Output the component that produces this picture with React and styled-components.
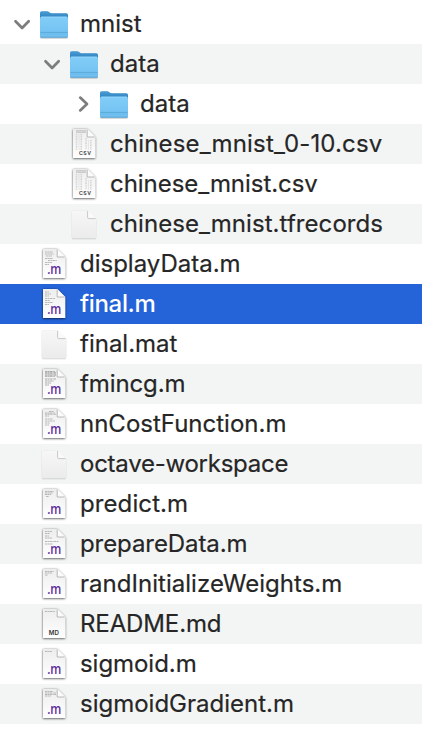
import React from "react";
import styled, { createGlobalStyle } from "styled-components";

const Global = createGlobalStyle`
  body { margin: 0; background: #fff; }
`;

const Tree = styled.main`
  box-sizing: border-box;
  width: 422px;
  height: 736px;
  padding-top: 4px;
  overflow: hidden;
  background: #fff;
  font-family: Inter, "Liberation Sans", sans-serif;
`;

const Row = styled.div`
  display: flex;
  align-items: center;
  height: 40px;
  padding-left: ${(p) => 8 + p.$depth * 30}px;
  background: ${(p) => (p.$selected ? "#2563d9" : p.$striped ? "#f3f5f5" : "#fff")};
  color: ${(p) => (p.$selected ? "#fff" : "#262626")};
`;

const Toggle = styled.span`
  display: flex;
  width: 30px;
  height: 40px;
  flex: none;
`;

const IconSlot = styled.span`
  display: flex;
  width: 32px;
  height: 40px;
  margin-right: 10px;
  flex: none;
`;

const Name = styled.span`
  font-size: 24px;
  line-height: 40px;
  font-weight: ${(p) => (p.$selected ? 500 : 400)};
  letter-spacing: ${(p) => p.$tracking}px;
  -webkit-text-stroke: ${(p) => (p.$selected ? 0 : 0.2)}px currentColor;
  white-space: nowrap;
`;

const Chevron = ({ open }) => (
  <svg width="30" height="40" viewBox="0 0 30 40" fill="none" stroke="#7d7d7d" strokeWidth="2.7" strokeLinecap="round" strokeLinejoin="round">
    <path d={open ? "M7.5 17.2 14.1 24 20.7 17.2" : "M12.2 13.6 19 20 12.2 26.4"} />
  </svg>
);

const Folder = () => (
  <svg width="32" height="40" viewBox="0 0 32 40">
    <defs>
      <linearGradient id="folderFront" x1="0" y1="0" x2="0" y2="1">
        <stop offset="0" stopColor="#82cdf8" />
        <stop offset="1" stopColor="#6fbff0" />
      </linearGradient>
      <linearGradient id="folderBack" x1="0" y1="0" x2="0" y2="1">
        <stop offset="0" stopColor="#4a9dd6" />
        <stop offset="0.3" stopColor="#2f80bd" />
      </linearGradient>
      <filter id="folderShadow" x="-15%" y="-20%" width="130%" height="150%">
        <feDropShadow dx="0" dy=".6" stdDeviation=".6" floodColor="#000" floodOpacity=".5" />
      </filter>
    </defs>
    <g filter="url(#folderShadow)">
      <path d="M2 9Q2 7.3 3.7 7.3H9.1Q10.2 7.3 11 8L12 8.8Q12.4 9.2 13.3 9.2H28.3Q30 9.2 30 11V30H2Z" fill="url(#folderBack)" />
      <path d="M2 14.3Q2 12.7 3.6 12.7H28.4Q30 12.7 30 14.3V32.1Q30 33.6 28.4 33.6H3.6Q2 33.6 2 32.1Z" fill="url(#folderFront)" />
    </g>
    <path d="M3 13H29" stroke="#9edbfb" strokeWidth=".7" />
    <path d="M2.4 28.4H29.6" stroke="#4f9fcf" strokeWidth=".7" />
    <path d="M2.4 30H29.6" stroke="#4f9fcf" strokeWidth=".5" opacity=".5" />
    <path d="M2.6 33.2H29.4" stroke="#559dcc" strokeWidth=".7" />
  </svg>
);

const PageLabel = styled.text`
  font-family: ${(p) => (p.$code ? '"Open Sans"' : "Inter")}, sans-serif;
  font-size: ${(p) => (p.$code ? 14 : p.$narrow ? 5.2 : 5.8)}px;
  font-weight: 600;
  letter-spacing: ${(p) => (p.$narrow ? 0.55 : 0)}px;
  fill: ${(p) => (p.$code ? "#5f2b9b" : "#333")};
`;

// Miniature text lines on a document: [x, y, width]
const previews = {
  display: [[7, 8, 8], [7, 10, 9], [8, 12, 6], [7, 14.5, 8], [10, 16.5, 9], [7, 18.5, 7], [7, 20.5, 4]],
  final: [[7, 8, 4], [7, 10, 6], [7, 12, 4], [7, 14.5, 10], [7, 16.5, 5], [7, 18.5, 8], [7, 20.5, 4]],
  dense: [[7, 7.5, 10], [7, 8.7, 11], [7, 9.9, 11], [7, 11.1, 11], [7, 12.3, 10], [7, 15, 11], [7, 17, 9], [7, 19, 6], [7, 21, 4]],
  cost: [[11, 7.5, 5], [7, 9, 10], [7, 10.2, 11], [7, 12, 4], [7, 15, 8], [7, 17, 10], [7, 19, 5], [7, 21, 4]],
  predict: [[7, 7.5, 9], [7, 9, 8], [7, 10.5, 6], [8, 12.5, 3]],
  prepare: [[7, 7.5, 7], [7, 9.5, 5], [7, 12, 4], [7, 14, 7], [7, 17.5, 14], [7, 20, 8]],
  rand: [[7, 7.5, 9], [7, 9, 7], [7, 11, 3]],
  readme: [[7, 7.5, 10]],
  sigmoid: [[7, 7.5, 7]],
  gradient: [[7, 7.5, 8], [7, 9, 11], [7, 10.5, 11], [7, 12, 6]],
};

const PageDefs = () => (
  <defs>
    <linearGradient id="paper" x1="0" y1="0" x2="0" y2="1">
      <stop offset="0" stopColor="#ededed" />
      <stop offset="1" stopColor="#fff" />
    </linearGradient>
    <linearGradient id="blank" x1="0" y1="0" x2="0" y2="1">
      <stop offset="0" stopColor="#f7f7f7" />
      <stop offset="1" stopColor="#ebebeb" />
    </linearGradient>
    <filter id="pageShadow" x="-20%" y="-20%" width="140%" height="140%">
      <feDropShadow dx="0" dy=".6" stdDeviation=".8" floodColor="#000" floodOpacity=".75" />
    </filter>
    <filter id="blankShadow" x="-20%" y="-20%" width="140%" height="140%">
      <feDropShadow dx="0" dy=".4" stdDeviation=".5" floodColor="#000" floodOpacity=".45" />
    </filter>
  </defs>
);

const BlankPage = () => (
  <svg width="32" height="40" viewBox="0 0 32 40">
    <PageDefs />
    <path filter="url(#blankShadow)" d="M5 6.4H19.8L28.2 14.6V33Q28.2 34.2 27 34.2H5Q3.8 34.2 3.8 33V7.6Q3.8 6.4 5 6.4Z" fill="url(#blank)" />
    <path d="M19.8 6.4 28.2 14.6H20.8Q19.6 14.6 19.6 13.4Z" fill="#fafafa" />
    <path d="M19.6 7V13.4Q19.6 14.6 20.8 14.6H27.6" fill="none" stroke="#bdbdbd" strokeWidth=".8" />
  </svg>
);

const Page = ({ kind, preview }) => (
  <svg width="32" height="40" viewBox="0 0 32 40">
    <PageDefs />
    <path filter="url(#pageShadow)" d="M5 5H19.2L27.2 13V34H5Z" fill="url(#paper)" />
    {kind === "csv" && (
      <g fill="none" stroke="#aaa">
        <path d="M8 6.8H18M8 8.3H18" strokeWidth=".7" />
        <path d="M8.5 10V26M13.3 10V26M18 14V26M22.8 16V26" strokeWidth="1.5" strokeDasharray="1 .7" opacity=".5" />
        <path d="M11 10V26M20.4 16V26" strokeWidth=".6" opacity=".4" />
      </g>
    )}
    {preview && previews[preview].map(([x, y, width]) => (
      <path key={y} d={`M${x} ${y}h${width}`} stroke={preview === "dense" ? "#999" : "#aaa"} strokeWidth=".8" strokeDasharray="2.5 .4 1.3 .3" />
    ))}
    <path d="M19.2 5V13H27.2Z" fill="#fbfbfb" />
    <path d="M19.2 5.5V13H26.7" fill="none" stroke="#a8a8a8" strokeWidth=".8" />
    {kind === "m" && <PageLabel $code x="9.2" y="30.2" textLength="14.2" lengthAdjust="spacingAndGlyphs">.m</PageLabel>}
    {kind === "csv" && <PageLabel $narrow x="11" y="31.1">CSV</PageLabel>}
    {kind === "md" && <PageLabel x="10.8" y="30.9" textLength="10" lengthAdjust="spacingAndGlyphs">MD</PageLabel>}
  </svg>
);

const FileIcon = ({ kind, preview }) => {
  if (kind === "folder") return <Folder />;
  if (kind === "blank") return <BlankPage />;
  return <Page kind={kind} preview={preview} />;
};

const items = [
  { name: "mnist", kind: "folder", depth: 0, open: true },
  { name: "data", kind: "folder", depth: 1, open: true },
  { name: "data", kind: "folder", depth: 2, open: false },
  { name: "chinese_mnist_0-10.csv", kind: "csv", depth: 1, tracking: 0.16 },
  { name: "chinese_mnist.csv", kind: "csv", depth: 1, tracking: -0.05 },
  { name: "chinese_mnist.tfrecords", kind: "blank", depth: 1, tracking: 0.06 },
  { name: "displayData.m", kind: "m", depth: 0, preview: "display" },
  { name: "final.m", kind: "m", depth: 0, preview: "final", selected: true, tracking: -0.35 },
  { name: "final.mat", kind: "blank", depth: 0 },
  { name: "fmincg.m", kind: "m", depth: 0, preview: "dense", tracking: -0.1 },
  { name: "nnCostFunction.m", kind: "m", depth: 0, preview: "cost" },
  { name: "octave-workspace", kind: "blank", depth: 0, tracking: -0.25 },
  { name: "predict.m", kind: "m", depth: 0, preview: "predict", tracking: 0.1 },
  { name: "prepareData.m", kind: "m", depth: 0, preview: "prepare", tracking: -0.08 },
  { name: "randInitializeWeights.m", kind: "m", depth: 0, preview: "rand", tracking: 0.03 },
  { name: "README.md", kind: "md", depth: 0, preview: "readme", tracking: -0.12 },
  { name: "sigmoid.m", kind: "m", depth: 0, preview: "sigmoid", tracking: -0.05 },
  { name: "sigmoidGradient.m", kind: "m", depth: 0, preview: "gradient" },
];

export default function App() {
  return (
    <>
      <Global />
      <Tree>
        {items.map(({ name, kind, depth, open, preview, selected, tracking = 0 }, i) => (
          <Row key={i} $depth={depth} $striped={i % 2 === 1} $selected={selected}>
            <Toggle>{open !== undefined && <Chevron open={open} />}</Toggle>
            <IconSlot><FileIcon kind={kind} preview={preview} /></IconSlot>
            <Name $selected={selected} $tracking={tracking}>{name}</Name>
          </Row>
        ))}
      </Tree>
    </>
  );
}
